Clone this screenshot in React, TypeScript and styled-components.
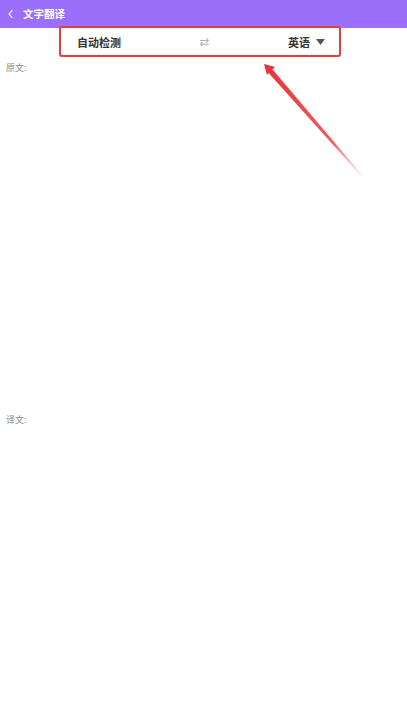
import styled, { createGlobalStyle } from "styled-components";

const GlobalStyle = createGlobalStyle`
  html, body {
    margin: 0;
    padding: 0;
    background: #ffffff;
    font-family: "Noto Sans CJK SC", "Noto Sans", sans-serif;
  }
  * {
    box-sizing: border-box;
  }
`;

const Page = styled.div`
  position: relative;
  width: 407px;
  height: 720px;
  overflow: hidden;
  background: #ffffff;
`;

const Header = styled.header`
  display: flex;
  align-items: center;
  gap: 7px;
  height: 28px;
  padding: 0 0 0 6px;
  background: #9c6ffa;
  color: #ffffff;
`;

const HeaderTitle = styled.h1`
  margin: 0;
  font-size: 10.5px;
  font-weight: 700;
  line-height: 1;
`;

const LangBar = styled.div`
  display: flex;
  align-items: center;
  justify-content: space-between;
  height: 31px;
  margin: -2px 66px 0 59px;
  padding: 0 14px 0 16px;
  border: 2px solid #ea3b40;
  border-radius: 3px;
`;

const LangLabel = styled.span`
  display: flex;
  align-items: center;
  gap: 6px;
  color: #333333;
  font-size: 11px;
  font-weight: 700;
`;

const SwapIcon = styled.span`
  color: #b5b5b5;
  font-size: 12px;
  font-family: "DejaVu Sans", sans-serif;
`;

const Section = styled.section<{ $height: number }>`
  height: ${({ $height }) => $height}px;
  padding: 6px 6px 0;
`;

const SectionLabel = styled.span`
  display: block;
  color: #8a8a8a;
  font-size: 9px;
  line-height: 10px;
`;

const Annotation = styled.svg`
  position: absolute;
  left: 0;
  top: 0;
  pointer-events: none;
`;

export default function App() {
  return (
    <Page>
      <GlobalStyle />
      <Header>
        <svg width="10" height="12" viewBox="0 0 10 12">
          <path d="M6.5 2 L3 6 L6.5 10" fill="none" stroke="#e9defe" strokeWidth="1.3" />
        </svg>
        <HeaderTitle>文字翻译</HeaderTitle>
      </Header>
      <LangBar>
        <LangLabel>自动检测</LangLabel>
        <SwapIcon>⇄</SwapIcon>
        <LangLabel>
          英语
          <svg width="9" height="6" viewBox="0 0 9 6">
            <path d="M0 0 H9 L4.5 6 Z" fill="#555555" />
          </svg>
        </LangLabel>
      </LangBar>
      <Section $height={352}>
        <SectionLabel>原文:</SectionLabel>
      </Section>
      <Section $height={300}>
        <SectionLabel>译文:</SectionLabel>
      </Section>
      <Annotation width="407" height="720" viewBox="0 0 407 720">
        <defs>
          <linearGradient id="arrowFade" x1="265" y1="65" x2="362" y2="176" gradientUnits="userSpaceOnUse">
            <stop offset="0" stopColor="#ea3038" stopOpacity="1" />
            <stop offset="0.7" stopColor="#ee4a50" stopOpacity="0.9" />
            <stop offset="1" stopColor="#f4a0a3" stopOpacity="0.2" />
          </linearGradient>
        </defs>
        <path d="M268 69 L273 70 L363 176 L361 176 L269.5 74 Z" fill="url(#arrowFade)" />
        <path d="M264 64 L275 67 L267 75 Z" fill="#ea3038" />
      </Annotation>
    </Page>
  );
}
